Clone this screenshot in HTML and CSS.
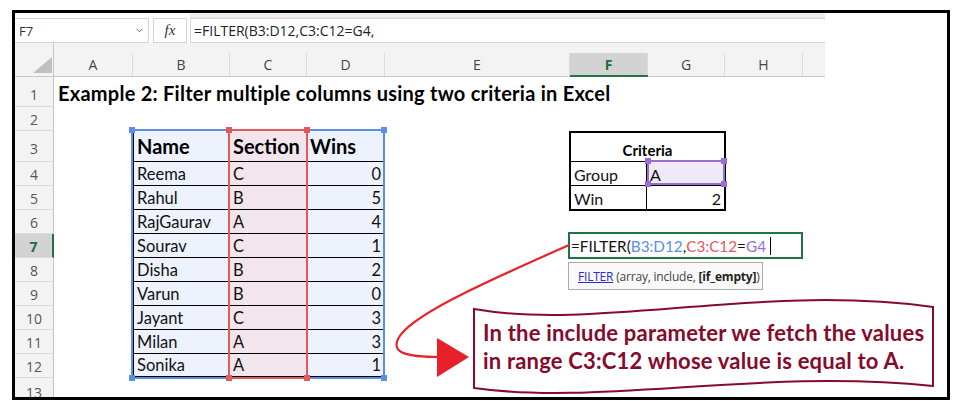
FILE: index.html
```html
<!DOCTYPE html>
<html>
<head>
<meta charset="utf-8">
<link rel="stylesheet" href="styles.css">
</head>
<body>
<div class="frame">
  <div class="excel">
    <div class="strip"></div>
    <div class="fbar">
      <div class="namebox"><span>F7</span><svg class="chev" width="7" height="5" viewBox="0 0 7 5"><path d="M0.5 0.8 L3.5 3.8 L6.5 0.8" fill="none" stroke="#666" stroke-width="1"/></svg></div>
      <div class="fx"><span>fx</span></div>
      <div class="finput"><span>=FILTER(B3:D12,C3:C12=G4,</span></div>
    </div>
    <div class="sheet">
      <div class="corner"><svg width="39" height="34" viewBox="0 0 39 34"><polygon points="37,14 37,30 18,30" fill="#bfbfbf"/></svg></div>
      <div class="ch"><div class="lbl">A</div></div>
      <div class="ch"><div class="lbl">B</div></div>
      <div class="ch"><div class="lbl">C</div></div>
      <div class="ch"><div class="lbl">D</div></div>
      <div class="ch"><div class="lbl">E</div></div>
      <div class="ch sel"><div class="lbl">F</div></div>
      <div class="ch"><div class="lbl">G</div></div>
      <div class="ch"><div class="lbl">H</div></div>
      <div class="ch"><div class="lbl last"></div></div>

      <div class="rh r1">1</div>
      <div class="rh r2">2</div>
      <div class="rh r3">3</div>
      <div class="rh r4">4</div>
      <div class="rh r5">5</div>
      <div class="rh r6">6</div>
      <div class="rh r7 sel">7</div>
      <div class="rh r8">8</div>
      <div class="rh r9">9</div>
      <div class="rh r10">10</div>
      <div class="rh r11">11</div>
      <div class="rh r12">12</div>
      <div class="rh r13">13</div>

      <div class="title">Example 2: Filter multiple columns using two criteria in Excel</div>

      <div class="dtable">
        <div class="td th">Name</div><div class="td th c">Section</div><div class="td th">Wins</div>
        <div class="td">Reema</div><div class="td c">C</div><div class="td n">0</div>
        <div class="td">Rahul</div><div class="td c">B</div><div class="td n">5</div>
        <div class="td">RajGaurav</div><div class="td c">A</div><div class="td n">4</div>
        <div class="td">Sourav</div><div class="td c">C</div><div class="td n">1</div>
        <div class="td">Disha</div><div class="td c">B</div><div class="td n">2</div>
        <div class="td">Varun</div><div class="td c">B</div><div class="td n">0</div>
        <div class="td">Jayant</div><div class="td c">C</div><div class="td n">3</div>
        <div class="td">Milan</div><div class="td c">A</div><div class="td n">3</div>
        <div class="td lastrow">Sonika</div><div class="td c lastrow">A</div><div class="td n lastrow">1</div>
      </div>

      <div class="crit">
        <div class="chd">Criteria</div>
        <div class="ck">Group</div><div class="cv sel">A</div>
        <div class="ck bottom">Win</div><div class="cv n bottom">2</div>
      </div>

      <div class="fedit"><span>=FILTER(</span><span class="cb">B3:D12</span><span>,</span><span class="cr">C3:C12</span><span>=</span><span class="cp">G4</span><span class="caret"></span></div>
    </div>
  </div>

  <div class="selbox blue">
    <i class="hd tl"></i><i class="hd tr"></i><i class="hd bl"></i><i class="hd br"></i>
  </div>
  <div class="selbox red">
    <i class="hd tl"></i><i class="hd tr"></i><i class="hd bl"></i><i class="hd br"></i>
  </div>
  <div class="selbox purple">
    <i class="hd tl"></i><i class="hd tr"></i><i class="hd bl"></i><i class="hd br"></i>
  </div>

  <div class="tip"><span><span class="fn">FILTER</span> (array, include, <b>[if_empty]</b>)</span></div>

  <svg class="ov" width="932" height="384" viewBox="15 13 932 384">
    <path d="M569 245 C 500 276 410 314 398 339 C 392 352 404 357 440 357" fill="none" stroke="#e8232a" stroke-width="2.2"/>
    <polygon points="437,338 437,377 469,357" fill="#e8202a"/>
    <path d="M474 309 C 600 331 760 283 933 307 L 933 386 C 760 368 600 406 474 388 Z" fill="#fff" stroke="#850b2d" stroke-width="2"/>
  </svg>
  <div class="callout">In the include parameter we fetch the values<br>in range C3:C12 whose value is equal to A.</div>
</div>
</body>
</html>
```

FILE: styles.css
```css
* { box-sizing: border-box; }
body { margin: 0; background: #fff; font-family: "Open Sans", "Noto Sans", sans-serif; }

.frame {
  position: relative;
  margin: 10px 0 0 12px;
  width: 938px;
  height: 390px;
  border: 3px solid #000;
  background: #fff;
  overflow: hidden;
}

.excel { width: 810px; display: flex; flex-direction: column; }
.excel > * { flex: none; }

.strip { height: 5px; margin-left: 175px; background: #eeeeee; border-bottom: 1px solid #e2e2e2; }

.fbar { height: 25px; display: flex; background: #fff; }
.namebox {
  width: 134px;
  border: 1px solid #d4d4d4;
  border-left: none;
  display: flex;
  align-items: center;
  justify-content: space-between;
  padding: 0 4px 0 4px;
  font-size: 13px;
  color: #333;
}
.chev { margin-right: 1px; }
.fx {
  width: 34px;
  margin-left: 4px;
  border: 1px solid #d4d4d4;
  display: flex;
  align-items: center;
  justify-content: center;
  font: italic 15px "Liberation Serif", serif;
  color: #333;
}
.finput {
  flex: 1;
  margin-left: 3px;
  border: 1px solid #d4d4d4;
  border-right: none;
  padding-left: 3px;
  font-size: 14px;
  color: #222;
  display: flex;
  align-items: center;
}

.sheet {
  display: grid;
  grid-template-columns: 39px 79px 97px 77px 78px 185px 78px 77px 78px 22px;
  grid-template-rows: 34px 30px 24px 31px repeat(9, 24px) 24px;
}

.corner { background: #f3f3f3; border-bottom: 1px solid #c6c6c6; border-right: 1px solid #c6c6c6; }
.corner svg { display: block; }

.ch { background: #f3f3f3; padding-top: 10px; border-bottom: 1px solid #c6c6c6; }
.ch .lbl {
  height: 100%;
  display: flex;
  align-items: center;
  justify-content: center;
  border-right: 1px solid #dcdcdc;
  font-size: 14px;
  color: #444;
}
.ch .lbl.last { border-right: none; }
.ch.sel { border-bottom: 2px solid #217346; }
.ch.sel .lbl { background: #d3d3d3; color: #1d6b3f; font-weight: bold; }

.rh {
  grid-column: 1;
  background: #f3f3f3;
  border-bottom: 1px solid #dcdcdc;
  border-right: 1px solid #c6c6c6;
  display: flex;
  align-items: center;
  justify-content: center;
  padding-top: 2px;
  font-size: 14px;
  color: #555;
}
.rh.sel { background: #d3d3d3; color: #1d6b3f; font-weight: bold; border-right: 2px solid #217346; }
.r1 { grid-row: 2; padding-top: 6px; }
.r2 { grid-row: 3; }
.r3 { grid-row: 4; padding-top: 4px; }
.r4 { grid-row: 5; }
.r5 { grid-row: 6; }
.r6 { grid-row: 7; }
.r7 { grid-row: 8; }
.r8 { grid-row: 9; }
.r9 { grid-row: 10; }
.r10 { grid-row: 11; }
.r11 { grid-row: 12; }
.r12 { grid-row: 13; }
.r13 { grid-row: 14; padding-top: 6px; }

.title {
  grid-row: 2;
  grid-column: 2 / 11;
  align-self: end;
  padding: 0 0 2px 4px;
  font: bold 20px Lato, sans-serif;
  letter-spacing: 0.25px;
  color: #000;
  white-space: nowrap;
}

.dtable {
  grid-row: 4 / 14;
  grid-column: 3 / 6;
  display: grid;
  grid-template-columns: 96px 77px 78px;
  grid-template-rows: 31px repeat(9, 24px);
  border-left: 1px solid #000;
  font-family: Lato, sans-serif;
}
.td {
  background: #edf2fd;
  border-bottom: 1px solid #000;
  border-right: 1px solid #000;
  display: flex;
  align-items: flex-end;
  padding: 0 3px 1px 3px;
  font-size: 16.5px;
  color: #111;
  white-space: nowrap;
}
.td.c { background: #f3e5ec; }
.td.n { justify-content: flex-end; }
.td.th { font-weight: bold; font-size: 20px; padding-bottom: 3px; color: #000; }
.td.lastrow { border-bottom: 2px solid #000; }

.crit {
  grid-row: 4 / 7;
  grid-column: 7 / 9;
  margin: 0 -1px -1px -1px;
  border: 2px solid #000;
  display: grid;
  grid-template-columns: 76px 1fr;
  grid-template-rows: 29px 24px 1fr;
  font-family: Lato, sans-serif;
  font-size: 16px;
  color: #111;
}
.chd {
  grid-column: 1 / 3;
  border-bottom: 1px solid #000;
  display: flex;
  align-items: flex-end;
  justify-content: center;
  padding-bottom: 2px;
  font-weight: bold;
  font-size: 15px;
  color: #000;
}
.ck, .cv { display: flex; align-items: flex-end; padding: 0 3px 1px 3px; border-bottom: 1px solid #000; }
.ck { border-right: 1px solid #000; }
.ck.bottom, .cv.bottom { border-bottom: none; }
.cv.sel { background: #efe9f8; }
.cv.n { justify-content: flex-end; }

.fedit {
  grid-row: 8;
  grid-column: 7 / 10;
  margin: -2px 0 -1px -2px;
  border: 2px solid #217346;
  background: #fff;
  display: flex;
  align-items: center;
  padding-left: 1px;
  font: 15.3px Lato, sans-serif;
  color: #111;
  white-space: nowrap;
}
.cb { color: #5b8ee8; }
.cr { color: #e35a5a; }
.cp { color: #9a6fd4; }
.caret { display: inline-block; width: 1px; height: 18px; background: #000; margin-left: 4px; }

.selbox { position: absolute; border: 2px solid; }
.selbox .hd { position: absolute; width: 6px; height: 6px; background: currentColor; }
.hd.tl { left: -4px; top: -4px; }
.hd.tr { right: -4px; top: -4px; }
.hd.bl { left: -4px; bottom: -4px; }
.hd.br { right: -4px; bottom: -4px; }
.selbox.blue { color: #5b8ee8; border-color: #5b8ee8; left: 116px; top: 116px; width: 254px; height: 250px; }
.selbox.red { color: #e35a5a; border-color: #e35a5a; left: 213px; top: 116px; width: 80px; height: 250px; }
.selbox.purple { color: #9a6fd4; border-color: #9a6fd4; left: 632px; top: 147px; width: 78px; height: 25px; }

.tip {
  position: absolute;
  left: 553px;
  top: 249px;
  width: 195px;
  height: 28px;
  border: 1px solid #ababab;
  background: #f9f9f9;
  display: flex;
  align-items: center;
  padding-left: 9px;
  font-size: 12px;
  color: #444;
  white-space: nowrap;
  letter-spacing: -0.2px;
}
.tip .fn { color: #2b2bd6; text-decoration: underline; }
.tip b { color: #222; }

.ov { position: absolute; left: 0; top: 0; pointer-events: none; }

.callout {
  position: absolute;
  left: 468px;
  top: 306px;
  font: bold 22px/28px Lato, sans-serif;
  letter-spacing: 0.2px;
  color: #850b2d;
  white-space: nowrap;
}
```
